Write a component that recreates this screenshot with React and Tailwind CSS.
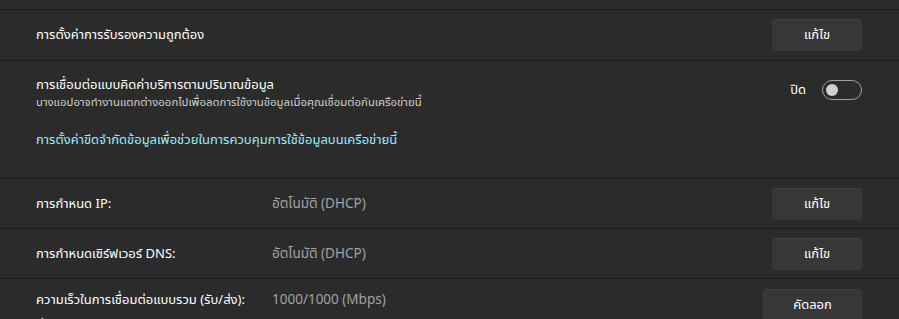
import React from "react";

const font = { fontFamily: '"Noto Sans", "Noto Sans Thai", "DejaVu Sans", sans-serif' };

function Btn({ children, w = "w-[90px]" }) {
  return (
    <button
      className={`${w} h-[32px] rounded-[4px] bg-[#373737] border border-[#3a3a3a] border-t-[#3f3f3f] text-[13px] text-white flex items-center justify-center`}
    >
      {children}
    </button>
  );
}

function InfoRow({ label, value, btn, btnW }) {
  return (
    <div className="h-[50px] border-t border-[#1d1d1d] pl-[36px] pr-[37px] flex items-center">
      <div className="w-[236px] text-[13px] text-white">{label}</div>
      <div className="flex-1 text-[13.5px] text-[#a3a3a3]">{value}</div>
      <Btn w={btnW}>{btn}</Btn>
    </div>
  );
}

export default function App() {
  return (
    <div className="w-[899px] h-[319px] overflow-hidden bg-[#2b2b2b]" style={font}>
      <div className="h-[9px]" />
      {/* Row 1 */}
      <div className="h-[51px] border-t border-[#1d1d1d] pl-[36px] pr-[37px] flex items-center justify-between">
        <div className="text-[13px] text-white">การตั้งค่าการรับรองความถูกต้อง</div>
        <Btn>แก้ไข</Btn>
      </div>
      {/* Row 2 */}
      <div className="h-[118px] border-t border-[#1d1d1d] pl-[36px] pr-[37px] pt-[13px]">
        <div className="flex items-center justify-between">
          <div>
            <div className="text-[13px] leading-[20px] text-white">การเชื่อมต่อแบบคิดค่าบริการตามปริมาณข้อมูล</div>
            <div className="text-[11.4px] leading-[16px] text-[#cfcfcf]">
              บางแอปอาจทำงานแตกต่างออกไปเพื่อลดการใช้งานข้อมูลเมื่อคุณเชื่อมต่อกับเครือข่ายนี้
            </div>
          </div>
          <div className="flex items-center gap-[16px] -mt-[4px]">
            <span className="text-[13px] text-white">ปิด</span>
            <div className="w-[40px] h-[20px] rounded-full border border-[#a0a0a0] flex items-center pl-[3px]">
              <div className="w-[12px] h-[12px] rounded-full bg-[#d0d0d0]" />
            </div>
          </div>
        </div>
        <div className="mt-[19px] text-[13px] leading-[20px] text-[#99ebff]">
          การตั้งค่าขีดจำกัดข้อมูลเพื่อช่วยในการควบคุมการใช้ข้อมูลบนเครือข่ายนี้
        </div>
      </div>
      <InfoRow label="การกำหนด IP:" value="อัตโนมัติ (DHCP)" btn="แก้ไข" />
      <InfoRow label="การกำหนดเซิร์ฟเวอร์ DNS:" value="อัตโนมัติ (DHCP)" btn="แก้ไข" />
      {/* Row 5 */}
      <div className="border-t border-[#1d1d1d] pl-[36px] pr-[37px] pt-[10px] flex items-start">
        <div className="w-[236px] text-[13px] leading-[20px] text-white">
          <div>ความเร็วในการเชื่อมต่อแบบรวม (รับ/ส่ง):</div>
          <div className="mt-[7px]">ที่อยู่ IPv6 ภายในลิงก์:</div>
        </div>
        <div className="flex-1 text-[13.5px] leading-[20px] text-[#a3a3a3]">1000/1000 (Mbps)</div>
        <Btn w="w-[99px]">คัดลอก</Btn>
      </div>
    </div>
  );
}
